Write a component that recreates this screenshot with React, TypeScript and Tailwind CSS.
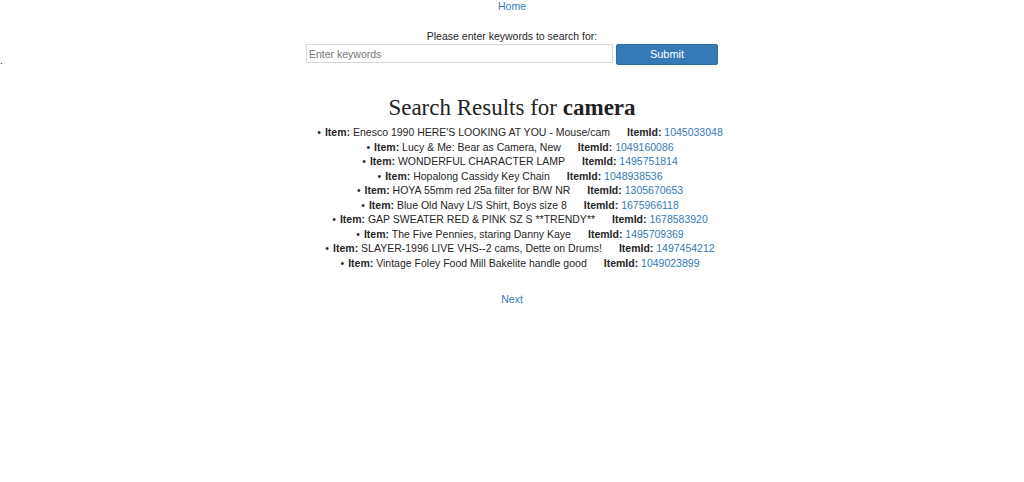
const items = [
  { name: "Enesco 1990 HERE'S LOOKING AT YOU - Mouse/cam", id: "1045033048" },
  { name: "Lucy & Me: Bear as Camera, New", id: "1049160086" },
  { name: "WONDERFUL CHARACTER LAMP", id: "1495751814" },
  { name: "Hopalong Cassidy Key Chain", id: "1048938536" },
  { name: "HOYA 55mm red 25a filter for B/W NR", id: "1305670653" },
  { name: "Blue Old Navy L/S Shirt, Boys size 8", id: "1675966118" },
  { name: "GAP SWEATER RED & PINK SZ S **TRENDY**", id: "1678583920" },
  { name: "The Five Pennies, staring Danny Kaye", id: "1495709369" },
  { name: "SLAYER-1996 LIVE VHS--2 cams, Dette on Drums!", id: "1497454212" },
  { name: "Vintage Foley Food Mill Bakelite handle good", id: "1049023899" },
];

export default function App() {
  return (
    <div className="w-[1024px] h-[482px] bg-white text-[#262626] text-[10.5px] leading-[14.5px] font-['Liberation_Sans',Arial,sans-serif]">
      <div className="text-center leading-[12.5px]">
        <a href="#" className="text-[#337ab7]">Home</a>
      </div>

      <div className="mt-[16px] text-center">Please enter keywords to search for:</div>
      <div className="h-0 leading-none">
        <span className="block pt-[13px] text-[10px]">.</span>
      </div>
      <form className="flex justify-center items-start gap-[3px] mt-[1px]">
        <input
          type="text"
          placeholder="Enter keywords"
          className="w-[307px] h-[19px] border border-[#d6d6d6] px-[2px] text-[10.5px] placeholder:text-[#777] outline-none"
        />
        <button
          type="button"
          className="w-[102px] h-[21px] bg-[#337ab7] border border-[#2e6da4] rounded-[2px] text-white text-[11px]"
        >
          Submit
        </button>
      </form>

      <h1 className="mt-[29px] text-center text-[23px] leading-[28px] text-[#222] font-['Liberation_Serif','Times_New_Roman',serif]">
        Search Results for <b>camera</b>
      </h1>

      <ul className="mt-[3px] pl-[16px] text-center">
        {items.map((it) => (
          <li key={it.id}>
            <span className="mr-[4px]">•</span>
            <b>Item:</b> {it.name}
            <b className="ml-[17px]">ItemId:</b>{" "}
            <a href="#" className="text-[#337ab7]">{it.id}</a>
          </li>
        ))}
      </ul>

      <div className="mt-[22px] text-center">
        <a href="#" className="text-[#337ab7]">Next</a>
      </div>
    </div>
  );
}
